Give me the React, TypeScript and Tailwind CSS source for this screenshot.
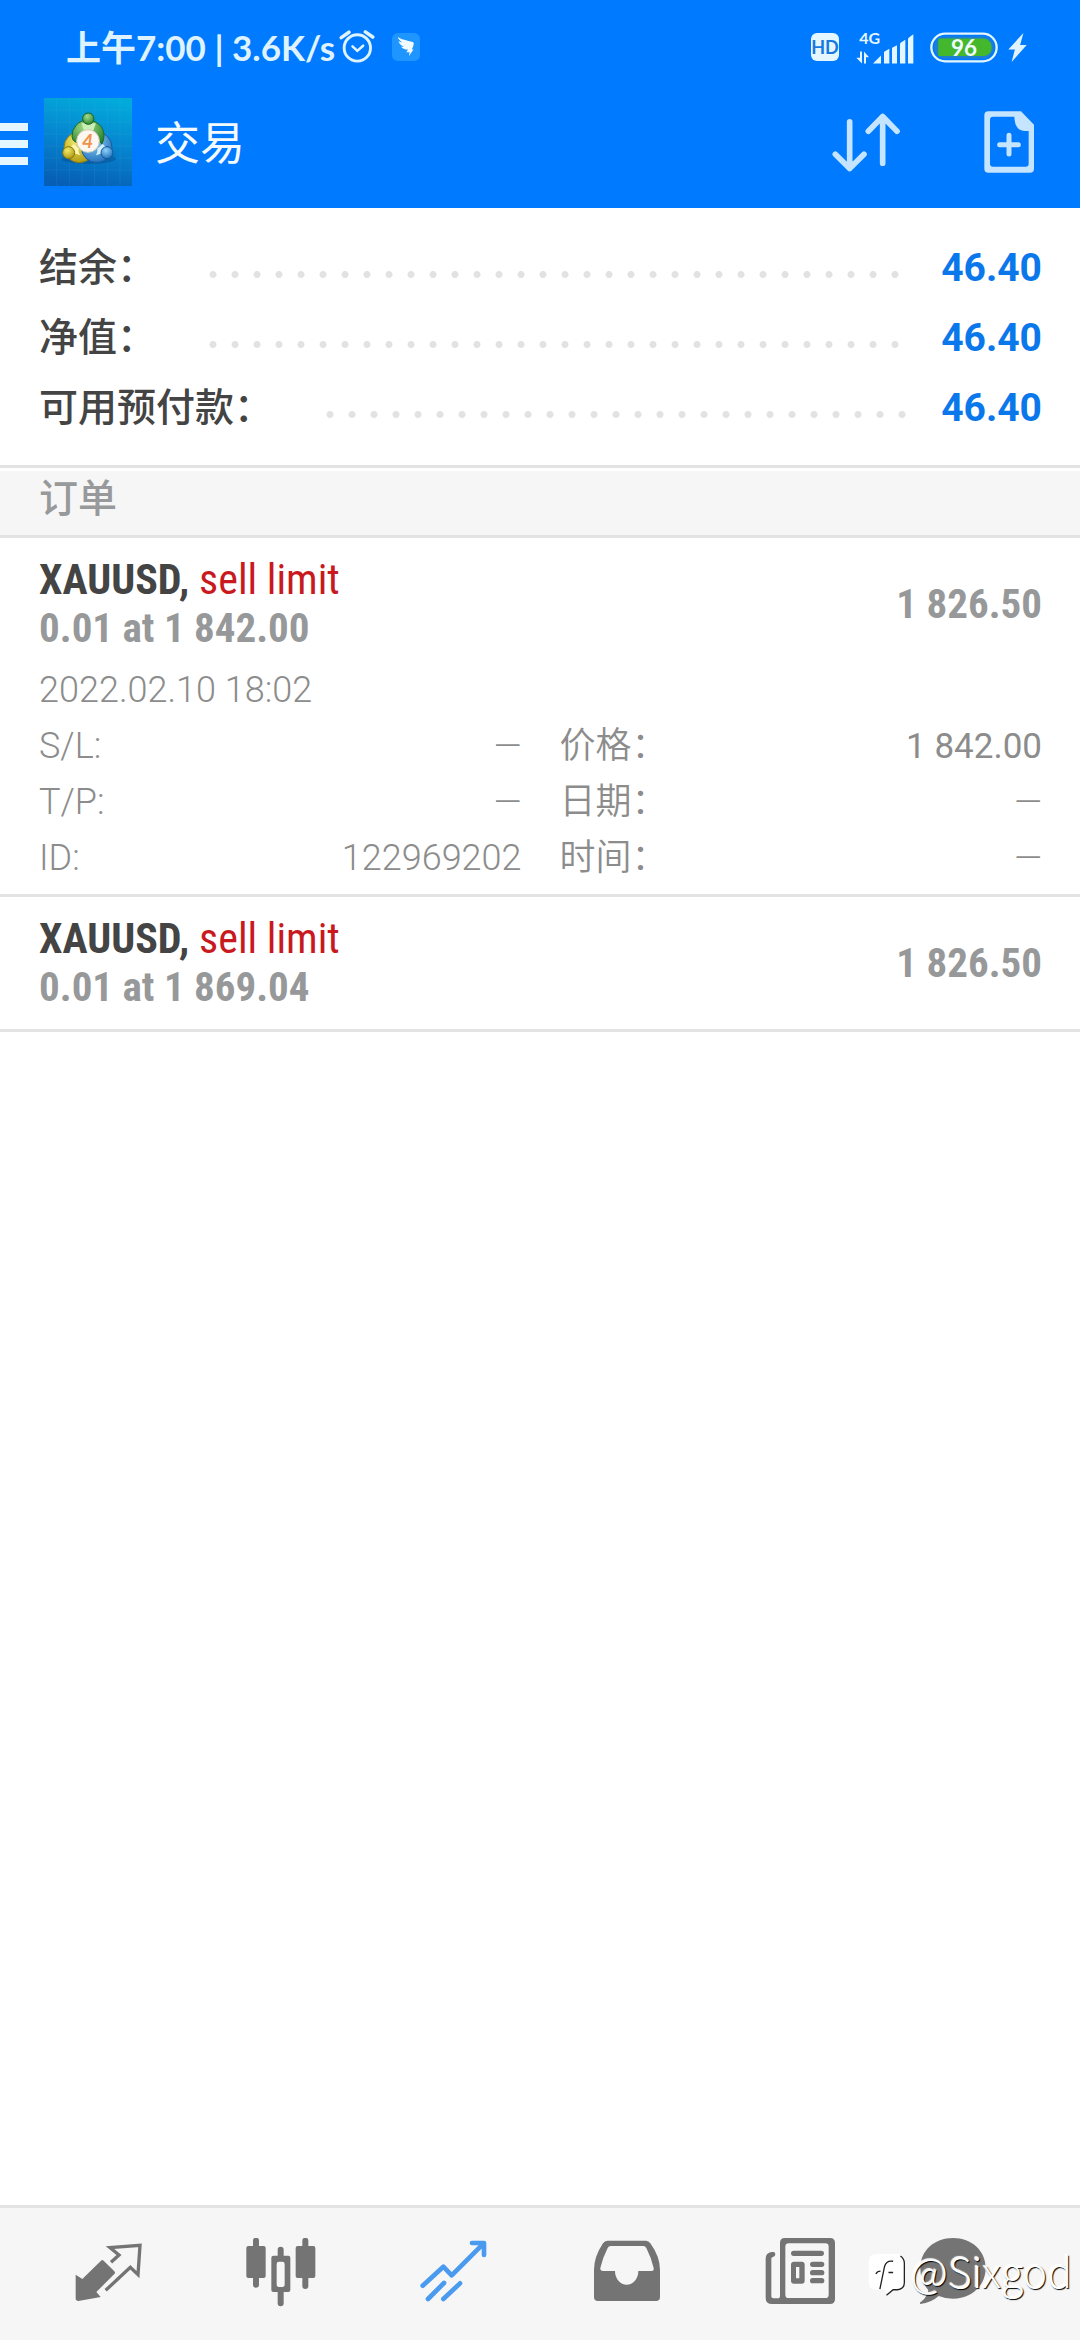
import type { ReactNode } from "react";

const CONDENSED = "font-['Roboto_Condensed','Liberation_Sans_Narrow',sans-serif]";

function AlarmIcon() {
  return (
    <svg viewBox="1014 86 112 112" className="ml-1 size-9" fill="none" stroke="#dff3ff" aria-hidden="true">
      <circle cx="1071" cy="145" r="41" strokeWidth="9" />
      <path d="M1056 140l15 14 18-16" strokeWidth="8" strokeLinecap="round" />
      <path d="M1021 113l24-17M1119 111l-23-16" strokeWidth="11" strokeLinecap="round" />
    </svg>
  );
}

function WingIcon() {
  return (
    <svg viewBox="1178 98 86 86" className="ml-[17px] size-[28px]" aria-hidden="true">
      <rect x="1178" y="98" width="86" height="86" rx="18" fill="#1f96ff" />
      <path
        d="M1196 110c8 7 28 10 46 16 4 2 3 7 1 13l-4 10h5l-14 20 2-12h-10l5-8c-10 0-17-4-21-9l9 0c-9-4-15-10-17-17l11 4c-7-6-12-11-13-17z"
        fill="#f2fbff"
      />
    </svg>
  );
}

function SignalIcon() {
  return (
    <svg viewBox="225 66 180 140" className="ml-[16px] h-[47px] w-[60px]" fill="#e4f6ff" aria-hidden="true">
      <text x="238" y="125" fontFamily="Lato, sans-serif" fontWeight="700" fontSize="48">
        4G
      </text>
      <path d="M240 148h6v36l-17-17h11zM252 184v-36l15 17h-9v19z" />
      <path d="M279 184l24-24v24zM312 184v-33q0-3 3-4l13-7v44zM336 184v-45q0-3 3-4l12-6v55zM360 184v-58q0-3 3-5l13-8v71zM384 184v-72q0-4 3-6l13-10v88z" />
    </svg>
  );
}

function BatteryIcon() {
  return (
    <svg viewBox="444 94 210 94" className="ml-[14px] h-[31px] w-[70px]" aria-hidden="true">
      <rect x="450" y="99" width="198" height="84" rx="42" fill="none" stroke="#e4f6ff" strokeWidth="7" />
      <rect x="459" y="108" width="180" height="66" rx="33" fill="#1f7fd0" />
      <path d="M471 114h140q22 6 22 27t-22 26H471z" fill="#43b82c" />
      <text x="549" y="166" textAnchor="middle" fontFamily="Lato, sans-serif" fontWeight="700" fontSize="68" fill="#f0fbff">
        96
      </text>
    </svg>
  );
}

function BoltIcon() {
  return (
    <svg viewBox="678 96 64 92" className="ml-[8px] h-[31px] w-[21px]" fill="#dff3ff" aria-hidden="true">
      <path d="M728 98l-46 50h20l-10 38 46-52h-20z" />
    </svg>
  );
}

function StatusBar() {
  return (
    <div className="flex h-[76px] items-center pl-[66px] pr-[52px] pt-[18px] text-[#dff3ff]">
      <span className="font-['Lato','Noto_Sans_CJK_SC',sans-serif] text-[35px] font-bold leading-none">
        上午7:00 | 3.6K/s
      </span>
      <AlarmIcon />
      <WingIcon />
      <span className="ml-auto flex size-[28px] items-center justify-center rounded-[6px] bg-[#e4f6ff] font-['Lato',sans-serif] text-[18px] font-bold leading-none text-[#1878e0]">
        HD
      </span>
      <SignalIcon />
      <BatteryIcon />
      <BoltIcon />
    </div>
  );
}

function AppLogo() {
  return (
    <svg viewBox="0 0 264 264" className="ml-4 size-[88px]" aria-hidden="true">
      <defs>
        <linearGradient id="sky" x1="0.6" y1="0" x2="0.4" y2="1">
          <stop offset="0" stopColor="#02aadb" />
          <stop offset="0.5" stopColor="#0684cf" />
          <stop offset="1" stopColor="#065fb4" />
        </linearGradient>
        <radialGradient id="green" cx="0.4" cy="0.3" r="0.8">
          <stop offset="0" stopColor="#a6dc8a" />
          <stop offset="1" stopColor="#1f7d26" />
        </radialGradient>
        <radialGradient id="yellow" cx="0.4" cy="0.3" r="0.8">
          <stop offset="0" stopColor="#f2ea6a" />
          <stop offset="1" stopColor="#a89108" />
        </radialGradient>
        <radialGradient id="blue" cx="0.4" cy="0.3" r="0.8">
          <stop offset="0" stopColor="#8fd2fa" />
          <stop offset="1" stopColor="#1766b4" />
        </radialGradient>
      </defs>
      <rect width="264" height="264" fill="url(#sky)" />
      <path
        d="M38 0v264M76 0v264M114 0v264M152 0v264M190 0v264M228 0v264M0 36h264M0 72h264M0 108h264M0 144h264M0 180h264M0 216h264"
        stroke="#5cc4ee"
        strokeOpacity="0.16"
        strokeWidth="2"
      />
      <ellipse cx="134" cy="182" rx="82" ry="16" fill="#043f78" fillOpacity="0.35" />
      <g strokeWidth="3">
        <circle cx="106" cy="148" r="46" fill="url(#yellow)" stroke="#8b7d10" />
        <circle cx="158" cy="148" r="46" fill="url(#blue)" stroke="#155a9c" />
        <path d="M84 116a48 48 0 0 1 96-4q0 14-6 26l-36-34q-26 2-40 30-14-6-14-18z" fill="url(#green)" stroke="#1c6a2a" />
        <path d="M66 158l24-20 14 14q-2 12 6 20z" fill="#fdf6b0" stroke="none" />
        <path d="M198 158l-22-20-16 14q2 12-4 20z" fill="#d2efff" stroke="none" />
        <path d="M112 76h44l-10 26h-24z" fill="#c8f0b4" stroke="none" />
        <circle cx="133" cy="62" r="17" fill="url(#green)" stroke="#186024" />
        <circle cx="74" cy="164" r="18" fill="url(#yellow)" stroke="#85760c" />
        <circle cx="189" cy="164" r="18" fill="url(#blue)" stroke="#14569a" />
      </g>
      <circle cx="132" cy="129" r="34" fill="#fcf7f0" stroke="#cfcbb8" strokeWidth="3" />
      <text x="131" y="149" textAnchor="middle" fontFamily="Lato, sans-serif" fontStyle="italic" fontWeight="700" fontSize="58" fill="#f2924a">
        4
      </text>
    </svg>
  );
}

function Toolbar() {
  return (
    <div className="flex h-[132px] items-center pr-[45px]">
      <button type="button" aria-label="菜单" className="flex flex-col gap-[9px] pt-1">
        <span className="h-2 w-7 bg-[#e4f6ff]" />
        <span className="h-2 w-7 bg-[#e4f6ff]" />
        <span className="h-2 w-7 bg-[#e4f6ff]" />
      </button>
      <AppLogo />
      <h1 className="ml-[23px] pt-1 text-[45px] leading-none text-[#f4fbff]">交易</h1>
      <button type="button" aria-label="排序" className="ml-auto">
        <svg viewBox="150 330 210 188" className="h-[63px] w-[70px]" fill="none" stroke="#c4e4ff" strokeWidth="17" strokeLinecap="round" strokeLinejoin="round">
          <path d="M206 362v140M163 459l43 43 43-43M305 486V346M262 390l43-44 43 44" />
        </svg>
      </button>
      <button type="button" aria-label="新订单" className="ml-[82px]">
        <svg viewBox="606 330 156 192" className="h-16 w-[52px]">
          <path
            fillRule="evenodd"
            fill="#c4e4ff"
            d="M622 334h98l39 40v132q0 12-12 12H622q-12 0-12-12V346q0-12 12-12zM636 350q-9 0-9 9v132q0 9 9 9h98q9 0 9-9v-98h-12q-30-2-31-43z"
          />
          <path d="M684 406v56M656 434h56" stroke="#c4e4ff" strokeWidth="15" strokeLinecap="round" />
        </svg>
      </button>
    </div>
  );
}

function BalanceRow({ label, value }: { label: string; value: string }) {
  return (
    <div className="flex h-[70px] items-center">
      <dt className="text-[39px] font-medium leading-none text-[#444444]">{label}</dt>
      <span
        aria-hidden="true"
        className="ml-[46px] mr-[29px] mt-[12px] h-[11px] flex-1 bg-[radial-gradient(circle_at_center,#e2e2e2_3px,transparent_4px)] bg-[length:22px_11px]"
      />
      <dd className="font-['Roboto',sans-serif] text-[39px] font-bold leading-none text-[#0a78ea]">{value}</dd>
    </div>
  );
}

function Detail({ label, value, strong }: { label: string; value: string; strong?: boolean }) {
  return (
    <div className="flex h-14 items-center justify-between">
      <dt>{label}</dt>
      <dd className={strong ? "text-[35px] font-normal" : ""}>{value}</dd>
    </div>
  );
}

function Order({ price, current, children }: { price: string; current: string; children?: ReactNode }) {
  return (
    <li className="border-b-[3px] border-[#e3e3e3] pl-[39px] pr-[38px]">
      <div className={`flex items-center justify-between py-[18px] text-[41px] font-bold leading-[48px] text-[#979899] ${CONDENSED}`}>
        <div>
          <p className="text-[42px] text-[#444444]">
            XAUUSD, <span className="font-normal text-[#c8191e]">sell limit</span>
          </p>
          <p>0.01 at {price}</p>
        </div>
        <span>{current}</span>
      </div>
      {children}
    </li>
  );
}

function NavButton({ label, box, children }: { label: string; box: string; children: ReactNode }) {
  return (
    <button type="button" aria-label={label} className="flex h-[132px] items-center justify-center">
      <svg viewBox={box} className="size-[72px] shrink-0" fill="#747474">
        {children}
      </svg>
    </button>
  );
}

function BottomNav() {
  return (
    <nav className="grid grid-cols-[repeat(5,1.3fr)_1fr] border-t-[3px] border-[#e3e3e3] bg-[#f6f6f6] pl-[22px] pr-[60px]">
      <NavButton label="行情" box="216 144 216 216">
        <path d="M227 254l20 13 56-55q4-4 8 0l32 32q4 4 0 8l-54 54 13 15-67 12q-8 0-8-8z" />
        <path d="M333 217l24-22-27-22 90-7-6 88-23-22-74 69" fill="none" stroke="#747474" strokeWidth="10" />
      </NavButton>
      <NavButton label="图表" box="736 144 216 216">
        <path d="M760 152a9 9 0 0 1 18 0v16h14q6 0 6 6v84q0 6-6 6h-14v20a9 9 0 0 1-18 0v-20h-14q-6 0-6-6v-84q0-6 6-6h14zM908 152a9 9 0 0 1 18 0v16h15q6 0 6 6v84q0 6-6 6h-15v24a9 9 0 0 1-18 0v-24h-14q-6 0-6-6v-84q0-6 6-6h14z" />
        <path
          fillRule="evenodd"
          d="M834 179a9 9 0 0 1 18 0v18h14q6 0 6 6v97q0 6-6 6h-14v34a9 9 0 0 1-18 0v-34h-13q-6 0-6-6v-97q0-6 6-6h13zM838 215q-7 0-7 7v61q0 8 7 8h10q7 0 7-8v-61q0-7-7-7z"
        />
      </NavButton>
      <NavButton label="交易" box="176 144 216 216">
        <path
          d="M190 287l62-57 25 26 93-93M338 159h36v36M206 327l48-48M252 327l50-47"
          fill="none"
          stroke="#4a9af0"
          strokeWidth="14"
          strokeLinecap="round"
          strokeLinejoin="round"
        />
      </NavButton>
      <NavButton label="历史" box="695 144 216 216">
        <path
          fillRule="evenodd"
          d="M744 152h116q8 0 13 8 29 40 29 80v81q0 12-12 12H716q-12 0-12-12v-81q0-40 27-80 5-8 13-8zM754 168q-6 0-9 6-14 27-22 60-1 9 8 9h36a35 41 0 0 0 70 0h40q8 0 6-9-8-33-22-60-3-6-9-6z"
        />
      </NavButton>
      <NavButton label="新闻" box="134 144 216 216">
        <path
          fillRule="evenodd"
          d="M196 144h136q15 0 15 15v168q0 15-15 15H158q-19 0-19-19V206q0-18 18-20h5q6 0 6 7t-7 8q-5 0-5 6v112q0 6 6 6h13q7 0 7-8V159q0-15 14-15zM208 160q-10 0-10 10v144q0 10 10 10h110q10 0 10-10V170q0-10-10-10z"
        />
        <path d="M223 190h83M280 223h27M280 248h27M280 272h27" stroke="#747474" strokeWidth="16" strokeLinecap="round" />
        <path fillRule="evenodd" d="M224 215h23q9 0 9 9v48q0 9-9 9h-23q-9 0-9-9v-48q0-9 9-9zM230 231v34h10v-34z" />
      </NavButton>
      <NavButton label="消息" box="592 144 216 216">
        <path d="M700 144c56 0 98 38 98 90s-42 92-98 92q-24 0-43-8-22 20-55 24-4-3 4-8 17-14 20-34-24-26-24-66c0-52 42-90 98-90z" />
      </NavButton>
    </nav>
  );
}

function Watermark() {
  return (
    <div className="pointer-events-none absolute bottom-[43px] right-[8px] flex items-center gap-[5px] pt-1">
      <svg viewBox="448 206 116 136" className="mt-2 h-[45px] w-[39px]" aria-hidden="true">
        <path d="M476 212h60q24 0 24 24v60q0 22-24 24h-12l-18 18-4-18h-26q-24 0-24-24v-60q0-24 24-24z" fill="#ffffff" />
        <path d="M548 218q12 8 12 22v58q0 20-22 22h-12l-20 17M486 318l14-68q6-20 26-16M474 272q4-8 14-8M512 268h14" fill="none" stroke="#222222" strokeWidth="4" />
      </svg>
      <span className="font-['Noto_Sans_CJK_SC',sans-serif] text-[41px] font-light leading-none text-white [text-shadow:1px_1px_1px_#000000,-1px_-1px_1px_#ffffff]">
        @Sixgod
      </span>
    </div>
  );
}

export default function App() {
  return (
    <div className="relative flex min-h-screen flex-col bg-white font-['Roboto','Noto_Sans_CJK_SC',sans-serif]">
      <header className="bg-[#007aff]">
        <StatusBar />
        <Toolbar />
      </header>
      <main className="flex-1">
        <dl className="border-b-[3px] border-[#e3e3e3] pl-[39px] pr-[38px] pb-[22px] pt-[25px]">
          <BalanceRow label="结余：" value="46.40" />
          <BalanceRow label="净值：" value="46.40" />
          <BalanceRow label="可用预付款：" value="46.40" />
        </dl>
        <h2 className="mt-[3px] border-b-[3px] border-[#e3e3e3] bg-[#f6f6f6] px-[39px] pb-[8px] text-[39px] font-medium leading-[56px] text-[#98999b]">
          订单
        </h2>
        <ul>
          <Order price="1 842.00" current="1 826.50">
            <div className="-mt-2 pb-2 text-[36px] font-[350] leading-none text-[#8c8c8c]">
              <p className="flex h-14 items-center">2022.02.10 18:02</p>
              <dl className="grid grid-cols-2 gap-x-[38px]">
                <Detail label="S/L:" value="—" />
                <Detail label="价格：" value="1 842.00" strong />
                <Detail label="T/P:" value="—" />
                <Detail label="日期：" value="—" />
                <Detail label="ID:" value="122969202" />
                <Detail label="时间：" value="—" />
              </dl>
            </div>
          </Order>
          <Order price="1 869.04" current="1 826.50" />
        </ul>
      </main>
      <BottomNav />
      <Watermark />
    </div>
  );
}
